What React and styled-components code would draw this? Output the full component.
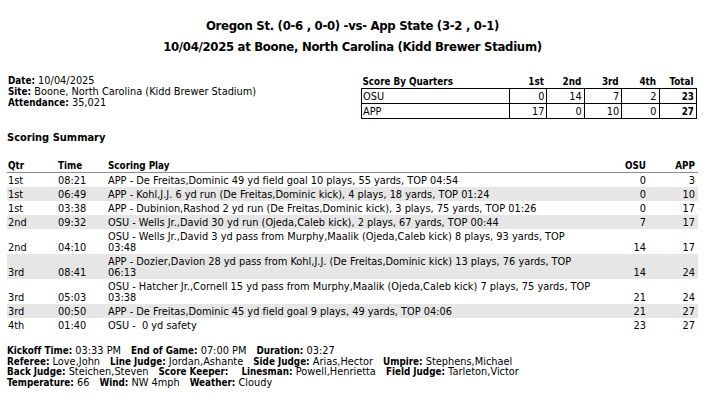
import React from "react";
import styled, { createGlobalStyle } from "styled-components";

const GlobalStyle = createGlobalStyle`
  * { box-sizing: border-box; }
  body {
    margin: 0;
    background: #fff;
    color: #000;
    font-family: "DejaVu Sans", Verdana, sans-serif;
    font-size: 9.8px;
    font-variant-ligatures: none;
  }
`;

const boldFont = `"DejaVu Sans Condensed", "DejaVu Sans", sans-serif`;

const quarters = [
  { team: "OSU", q: [0, 14, 7, 2], total: 23 },
  { team: "APP", q: [17, 0, 10, 0], total: 27 },
];

const plays = [
  { qtr: "1st", time: "08:21", text: ["APP - De Freitas,Dominic 49 yd field goal 10 plays, 55 yards, TOP 04:54"], osu: 0, app: 3 },
  { qtr: "1st", time: "06:49", text: ["APP - Kohl,J.J. 6 yd run (De Freitas,Dominic kick), 4 plays, 18 yards, TOP 01:24"], osu: 0, app: 10 },
  { qtr: "1st", time: "03:38", text: ["APP - Dubinion,Rashod 2 yd run (De Freitas,Dominic kick), 3 plays, 75 yards, TOP 01:26"], osu: 0, app: 17 },
  { qtr: "2nd", time: "09:32", text: ["OSU - Wells Jr.,David 30 yd run (Ojeda,Caleb kick), 2 plays, 67 yards, TOP 00:44"], osu: 7, app: 17 },
  { qtr: "2nd", time: "04:10", text: ["OSU - Wells Jr.,David 3 yd pass from Murphy,Maalik (Ojeda,Caleb kick) 8 plays, 93 yards, TOP", "03:48"], osu: 14, app: 17 },
  { qtr: "3rd", time: "08:41", text: ["APP - Dozier,Davion 28 yd pass from Kohl,J.J. (De Freitas,Dominic kick) 13 plays, 76 yards, TOP", "06:13"], osu: 14, app: 24 },
  { qtr: "3rd", time: "05:03", text: ["OSU - Hatcher Jr.,Cornell 15 yd pass from Murphy,Maalik (Ojeda,Caleb kick) 7 plays, 75 yards, TOP", "03:38"], osu: 21, app: 24 },
  { qtr: "3rd", time: "00:50", text: ["APP - De Freitas,Dominic 45 yd field goal 9 plays, 49 yards, TOP 04:06"], osu: 21, app: 27 },
  { qtr: "4th", time: "01:40", text: ["OSU -  0 yd safety"], osu: 23, app: 27 },
];

const footer = [
  [["Kickoff Time:", "03:33 PM"], ["End of Game:", "07:00 PM"], ["Duration:", "03:27"]],
  [["Referee:", "Love,John"], ["Line Judge:", "Jordan,Ashante"], ["Side Judge:", "Arias,Hector"], ["Umpire:", "Stephens,Michael"]],
  [["Back Judge:", "Steichen,Steven"], ["Score Keeper:", ""], ["Linesman:", "Powell,Henrietta"], ["Field Judge:", "Tarleton,Victor"]],
  [["Temperature:", "66"], ["Wind:", "NW 4mph"], ["Weather:", "Cloudy"]],
];

const Page = styled.div`
  width: 707px;
  padding: 15px 9px 0 7px;
`;

const Title = styled.h1`
  margin: 0;
  text-align: center;
  font-family: ${boldFont};
  font-size: 13px;
  letter-spacing: -0.3px;
  font-weight: bold;
  line-height: 21px;
`;

const TopRow = styled.div`
  display: flex;
  justify-content: space-between;
  align-items: flex-start;
  margin-top: 18px;
`;

const Info = styled.div`
  padding-left: 1px;
  line-height: 11px;
`;

const Label = styled.b`
  font-family: ${boldFont};
  font-weight: bold;
`;

const ScoreBox = styled.table`
  width: 336px;
  margin-top: 1px;
  margin-right: 1px;
  border-collapse: collapse;
  table-layout: fixed;
  line-height: 11px;
`;

const ScoreHead = styled.th`
  width: ${(p) => (p.$label ? "148px" : "auto")};
  text-align: ${(p) => (p.$label ? "left" : "right")};
  padding: 0 ${(p) => (p.$label ? "0" : "3px")} 1px 1px;
  font-family: ${boldFont};
  font-weight: bold;
  vertical-align: bottom;
`;

const ScoreCell = styled.td`
  border: 1px solid #000;
  height: 15px;
  padding: 1px 2px 0 1px;
  text-align: ${(p) => (p.$label ? "left" : "right")};
  font-family: ${(p) => (p.$bold ? boldFont : "inherit")};
  font-weight: ${(p) => (p.$bold ? "bold" : "normal")};
`;

const SectionTitle = styled.h2`
  margin: 12px 0 0;
  font-family: ${boldFont};
  font-size: 11px;
  font-weight: bold;
  line-height: 14px;
`;

const PlayRow = styled.div`
  display: grid;
  grid-template-columns: 50px 50px 492px 50px 1fr;
  align-items: end;
  line-height: 11px;
  padding: 2px 0 1px;
  background: ${(p) => (p.$shade ? "#e6e6e6" : "transparent")};
  border-bottom: ${(p) => (p.$head ? "1px solid #8c8c8c" : "none")};
  font-family: ${(p) => (p.$head ? boldFont : "inherit")};
  font-weight: ${(p) => (p.$head ? "bold" : "normal")};
  margin-top: ${(p) => (p.$head ? "13px" : "0")};
`;

const Cell = styled.div`
  padding: 0 ${(p) => (p.$num ? "3px" : "0")} 0 1px;
  text-align: ${(p) => (p.$num ? "right" : "left")};
  white-space: pre;
`;

const Footer = styled.div`
  margin-top: 14px;
  line-height: 10.7px;
`;

const FooterLine = styled.div`
  display: flex;
  column-gap: 10px;
  white-space: pre;
`;

export default function App() {
  return (
    <Page>
      <GlobalStyle />
      <Title>
        Oregon St. (0-6 , 0-0) -vs- App State (3-2 , 0-1)
        <br />
        10/04/2025 at Boone, North Carolina (Kidd Brewer Stadium)
      </Title>

      <TopRow>
        <Info>
          <div><Label>Date:</Label> 10/04/2025</div>
          <div><Label>Site:</Label> Boone, North Carolina (Kidd Brewer Stadium)</div>
          <div><Label>Attendance:</Label> 35,021</div>
        </Info>
        <ScoreBox>
          <thead>
            <tr>
              <ScoreHead $label>Score By Quarters</ScoreHead>
              <ScoreHead>1st</ScoreHead>
              <ScoreHead>2nd</ScoreHead>
              <ScoreHead>3rd</ScoreHead>
              <ScoreHead>4th</ScoreHead>
              <ScoreHead>Total</ScoreHead>
            </tr>
          </thead>
          <tbody>
            {quarters.map((r) => (
              <tr key={r.team}>
                <ScoreCell $label>{r.team}</ScoreCell>
                {r.q.map((v, i) => (
                  <ScoreCell key={i}>{v}</ScoreCell>
                ))}
                <ScoreCell $bold>{r.total}</ScoreCell>
              </tr>
            ))}
          </tbody>
        </ScoreBox>
      </TopRow>

      <SectionTitle>Scoring Summary</SectionTitle>

      <PlayRow $head>
        <Cell>Qtr</Cell>
        <Cell>Time</Cell>
        <Cell>Scoring Play</Cell>
        <Cell $num>OSU</Cell>
        <Cell $num>APP</Cell>
      </PlayRow>
      {plays.map((p, i) => (
        <PlayRow key={i} $shade={i % 2 === 1}>
          <Cell>{p.qtr}</Cell>
          <Cell>{p.time}</Cell>
          <Cell>{p.text.join("\n")}</Cell>
          <Cell $num>{p.osu}</Cell>
          <Cell $num>{p.app}</Cell>
        </PlayRow>
      ))}

      <Footer>
        {footer.map((line, i) => (
          <FooterLine key={i}>
            {line.map(([k, v]) => (
              <span key={k}>
                <Label>{k}</Label> {v}
              </span>
            ))}
          </FooterLine>
        ))}
      </Footer>
    </Page>
  );
}
